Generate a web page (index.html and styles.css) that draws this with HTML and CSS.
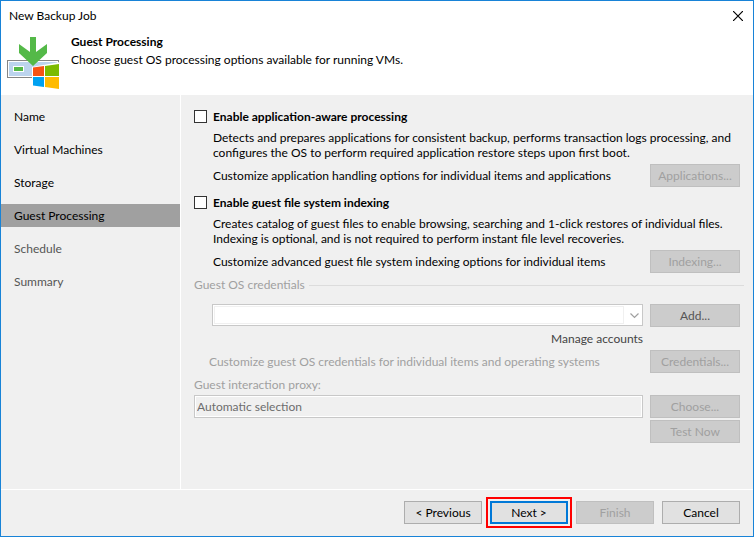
FILE: index.html
```
<!DOCTYPE html>
<html lang="en">
<head>
  <meta charset="UTF-8" />
  <meta name="viewport" content="width=device-width, initial-scale=1" />
  <title>New Backup Job</title>
  <link rel="stylesheet" href="styles.css">
</head>
<body>
  <div class="window">
    <div class="titlebar">
      <span>New Backup Job</span>
      <button class="close" type="button" aria-label="Close">
        <svg width="10" height="10" viewBox="0 0 10 10"><path d="M0 0L10 10M10 0L0 10" stroke="#000" stroke-width="1.2"/></svg>
      </button>
    </div>

    <header class="header">
      <svg class="logo" width="54" height="54" viewBox="0 0 54 54">
        <rect x="0.5" y="23.5" width="51" height="17" fill="#fff" stroke="#858585"/>
        <rect x="2" y="25" width="48" height="14" fill="#bcd4ee"/>
        <rect x="6.500" y="29.500" width="10" height="5" fill="#54b948" stroke="#fff"/>
        <path d="M23 0H29V15L40 7V16L26 29L12 16V7L23 15Z" fill="#54b948"/>
        <path d="M25 30L53 25V53L25 49Z" fill="#fff"/>
        <path d="M26 30.500L37 29V39H26Z" fill="#f65314"/>
        <path d="M38 29L52 27V39H38Z" fill="#7cbb00"/>
        <path d="M26 40H37V50L26 48.500Z" fill="#00a1f1"/>
        <path d="M38 40H52V52L38 50Z" fill="#ffbb00"/>
      </svg>
      <div>
        <h1>Guest Processing</h1>
        <p>Choose guest OS processing options available for running VMs.</p>
      </div>
    </header>

    <div class="content">
      <nav class="steps">
        <a href="#name">Name</a>
        <a href="#vms">Virtual Machines</a>
        <a href="#storage">Storage</a>
        <a href="#guest" class="active">Guest Processing</a>
        <a href="#schedule" class="pending">Schedule</a>
        <a href="#summary" class="pending">Summary</a>
      </nav>

      <main class="options">
        <section class="option">
          <div class="check">
            <input type="checkbox" id="appAware">
            <label for="appAware">Enable application-aware processing</label>
          </div>
          <p>Detects and prepares applications for consistent backup, performs transaction logs processing, and configures the OS to perform required application restore steps upon first boot.</p>
          <div class="row indent">
            <span>Customize application handling options for individual items and applications</span>
            <button type="button" disabled>Applications...</button>
          </div>
        </section>

        <section class="option">
          <div class="check">
            <input type="checkbox" id="indexing">
            <label for="indexing">Enable guest file system indexing</label>
          </div>
          <p>Creates catalog of guest files to enable browsing, searching and 1-click restores of individual files.<br>Indexing is optional, and is not required to perform instant file level recoveries.</p>
          <div class="row indent">
            <span>Customize advanced guest file system indexing options for individual items</span>
            <button type="button" disabled>Indexing...</button>
          </div>
        </section>

        <section>
          <div class="legend"><label for="credentials">Guest OS credentials</label></div>
          <div class="row indent">
            <div class="combo">
              <select id="credentials" disabled><option></option></select>
              <svg width="9" height="6" viewBox="0 0 9 6"><path d="M0.500 0.500L4.500 4.500L8.500 0.500" fill="none" stroke="#a0a0a0" stroke-width="1.200"/></svg>
            </div>
            <button type="button" class="add" disabled>Add...</button>
          </div>
          <div class="row">
            <a href="#accounts" class="manage">Manage accounts</a>
          </div>
          <div class="row faded">
            <span class="note">Customize guest OS credentials for individual items and operating systems</span>
            <button type="button" disabled>Credentials...</button>
          </div>
        </section>

        <section>
          <label class="proxy-label" for="proxy">Guest interaction proxy:</label>
          <div class="row proxy">
            <input type="text" id="proxy" value="Automatic selection" disabled>
            <button type="button" disabled>Choose...</button>
            <button type="button" class="test" disabled>Test Now</button>
          </div>
        </section>
      </main>
    </div>

    <footer class="footer">
      <button type="button">&lt; Previous</button>
      <button type="button" class="next">Next &gt;</button>
      <button type="button" disabled>Finish</button>
      <button type="button">Cancel</button>
    </footer>
  </div>
</body>
</html>
```

FILE: styles.css
```
* {
  box-sizing: border-box;
}
body {
  margin: 0;
  background: #f0f0f0;
  color: #000;
  font-family: Lato, "Segoe UI", sans-serif;
  font-size: 12px;
  line-height: 16px;
}
h1, p {
  margin: 0;
}
a {
  color: inherit;
  text-decoration: none;
}
button, input, select {
  font: inherit;
}
.window {
  display: flex;
  flex-direction: column;
  min-height: 100vh;
  border: 1px solid #1883d7;
}

/* Title bar and header */
.titlebar {
  display: flex;
  justify-content: space-between;
  align-items: center;
  height: 30px;
  padding: 0 8px;
  background: #fff;
}
.close {
  display: flex;
  padding: 2px;
  border: 0;
  background: none;
}
.header {
  display: flex;
  gap: 10px;
  height: 64px;
  padding: 2px 6px;
  background: #fff;
}
.logo {
  margin-top: 4px;
}
.header h1 {
  font-size: 12px;
  line-height: 18px;
}
.header p {
  line-height: 18px;
}

/* Wizard steps */
.content {
  display: flex;
  flex: 1;
}
.steps {
  display: flex;
  flex-direction: column;
  gap: 10px;
  width: 180px;
  padding-top: 10px;
  border-right: 1px solid #fff;
}
.steps a {
  padding: 0 13px;
  line-height: 23px;
}
.steps .active {
  background: #a0a0a0;
}
.steps .pending {
  color: #555;
}

/* Options */
.options {
  flex: 1;
  min-width: 0;
  padding: 10px 13px;
}
.option {
  margin-bottom: 4px;
}
.option p {
  margin: 2px 0 4px 19px;
  line-height: 15px;
}
.check {
  display: flex;
  align-items: center;
  gap: 6px;
  height: 23px;
  font-weight: bold;
}
.check input {
  width: 13px;
  height: 13px;
  margin: 0;
  border: 1px solid #333;
  background: #fff;
  appearance: none;
}
.check input:checked {
  background: #333;
}
.row {
  display: grid;
  grid-template-columns: 1fr 90px;
  gap: 2px 7px;
  align-items: center;
}
.row button {
  height: 23px;
}
.indent {
  margin-left: 18px;
}
.option .indent {
  margin-left: 19px;
}
.legend {
  display: flex;
  align-items: center;
  gap: 4px;
  margin: 0 -4px 11px 0;
  color: #a0a0a0;
}
.legend::after {
  content: "";
  flex: 1;
  height: 1px;
  background: #dcdcdc;
}
.combo {
  position: relative;
  align-self: start;
}
.combo select {
  display: block;
  width: 100%;
  height: 22px;
  border: 1px solid #c8c8c8;
  border-radius: 0;
  background: #fff;
  opacity: 1;
  appearance: none;
}
.combo::after {
  content: "";
  position: absolute;
  inset: 2px 19px 2px 2px;
  border: 1px solid #f0f0f0;
  pointer-events: none;
}
.combo svg {
  position: absolute;
  top: 9px;
  right: 4px;
  pointer-events: none;
}
.manage {
  justify-self: end;
  margin: 4px 0 3px;
  color: #444;
}
.faded, .proxy-label {
  color: #a0a0a0;
}
.note {
  padding-left: 15px;
}
.proxy-label {
  display: block;
  margin: 4px 0 2px;
}
.proxy input {
  width: 100%;
  height: 23px;
  padding: 0 2px;
  border: 1px solid #c8c8c8;
  background: #f0f0f0;
  box-shadow: inset 0 0 0 1px #fff;
  color: #6d6d6d;
}
.test {
  grid-column: 2;
}

/* Buttons */
.row button, .footer button {
  padding: 0;
  border: 1px solid #adadad;
  background: #e1e1e1;
  color: #000;
}
.row button:disabled, .footer button:disabled {
  border-color: #bfbfbf;
  background: #ccc;
  color: #a0a0a0;
}
.row .add:disabled {
  color: #555;
}
.footer {
  display: flex;
  justify-content: flex-end;
  gap: 8px;
  padding: 11px 13px 12px;
  border-top: 1px solid #fff;
}
.footer button {
  width: 78px;
  height: 23px;
}
.footer .next {
  border: 2px solid #0078d7;
  outline: 2px solid #f00;
  outline-offset: 2px;
}
```
